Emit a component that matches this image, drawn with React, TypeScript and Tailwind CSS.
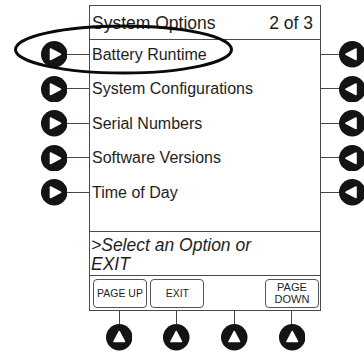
import React from "react";

const FONT = { fontFamily: '"Liberation Sans", Arial, sans-serif' };

function Knob({ dir }: { dir: "right" | "left" | "up" }) {
  const pts =
    dir === "right"
      ? "9.5,8 9.5,18.5 19.5,13.25"
      : dir === "left"
      ? "17,8 17,18.5 7,13.25"
      : "8,17.5 18.5,17.5 13.25,7.5";
  return (
    <svg width="26.5" height="26.5" viewBox="0 0 26.5 26.5" className="shrink-0 block">
      <circle cx="13.25" cy="13.25" r="13.25" fill="#141414" />
      <polygon points={pts} fill="#fff" stroke="#fff" strokeWidth="1.6" strokeLinejoin="round" />
    </svg>
  );
}

const rows = [
  "Battery Runtime",
  "System Configurations",
  "Serial Numbers",
  "Software Versions",
  "Time of Day",
];

export default function App() {
  return (
    <div className="relative w-[364px] h-[352px] bg-white overflow-hidden text-[#1e1e1e]" style={FONT}>
      <div className="flex flex-col pt-[5px]">
        <div className="flex items-start">
          {/* left keys */}
          <div className="w-[89px] shrink-0 flex flex-col pt-[32px] items-end">
            {rows.map((r) => (
              <div key={r} className="h-[34.5px] flex items-center">
                <Knob dir="right" />
                <div className="w-[22px] h-px bg-[#444]" />
              </div>
            ))}
          </div>
          {/* screen */}
          <div className="w-[232px] h-[306px] shrink-0 border border-[#4a4a4a] flex flex-col">
            <div className="h-[34px] shrink-0 flex items-center justify-between pl-[2px] pr-[7px] border-b border-[#4a4a4a] text-[17.5px] leading-none pt-[3px]">
              <span>System Options</span>
              <span>2 of 3</span>
            </div>
            <div className="h-[192px] shrink-0 flex flex-col gap-[10.5px] pt-[2.5px] border-b border-[#4a4a4a]">
              {rows.map((r) => (
                <div key={r} className="h-[24px] shrink-0 flex items-center pl-[2px] text-[16px] leading-none">
                  {r}
                </div>
              ))}
            </div>
            <div className="h-[44px] shrink-0 pl-[1px] pt-[4px] italic text-[17.5px] leading-[18.5px] border-b border-[#4a4a4a]">
              <div>&gt;Select an Option or</div>
              <div>EXIT</div>
            </div>
            <div className="flex-1 flex justify-between items-center pl-[3px] pr-[1px]">
              <div className="w-[54px] h-[29px] border border-[#555] rounded-[4px] flex items-center justify-center text-[10.5px] leading-none">
                PAGE UP
              </div>
              <div className="w-[54px] h-[29px] border border-[#555] rounded-[4px] flex items-center justify-center text-[10.5px] leading-none">
                EXIT
              </div>
              <div className="w-[54px] h-[29px]" />
              <div className="w-[54px] h-[29px] border border-[#555] rounded-[4px] flex flex-col items-center justify-center text-[11px] leading-[12px]">
                <span>PAGE</span>
                <span>DOWN</span>
              </div>
            </div>
          </div>
          {/* right keys */}
          <div className="shrink-0 flex flex-col pt-[32px]">
            {rows.map((r) => (
              <div key={r} className="h-[34.5px] flex items-center">
                <div className="w-[18px] h-px bg-[#444]" />
                <Knob dir="left" />
              </div>
            ))}
          </div>
        </div>
        {/* bottom keys */}
        <div className="flex ml-[90px] w-[230px] justify-between pl-[2px] pr-[1px]">
          {[0, 1, 2, 3].map((i) => (
            <div key={i} className="w-[54px] flex flex-col items-center">
              <div className="w-px h-[13px] bg-[#444]" />
              <Knob dir="up" />
            </div>
          ))}
        </div>
      </div>
      {/* highlight ellipse */}
      <svg className="absolute inset-0 pointer-events-none" width="364" height="352">
        <ellipse cx="123.5" cy="49.5" rx="108" ry="23.5" fill="none" stroke="#0a0a0a" strokeWidth="3" />
      </svg>
    </div>
  );
}
